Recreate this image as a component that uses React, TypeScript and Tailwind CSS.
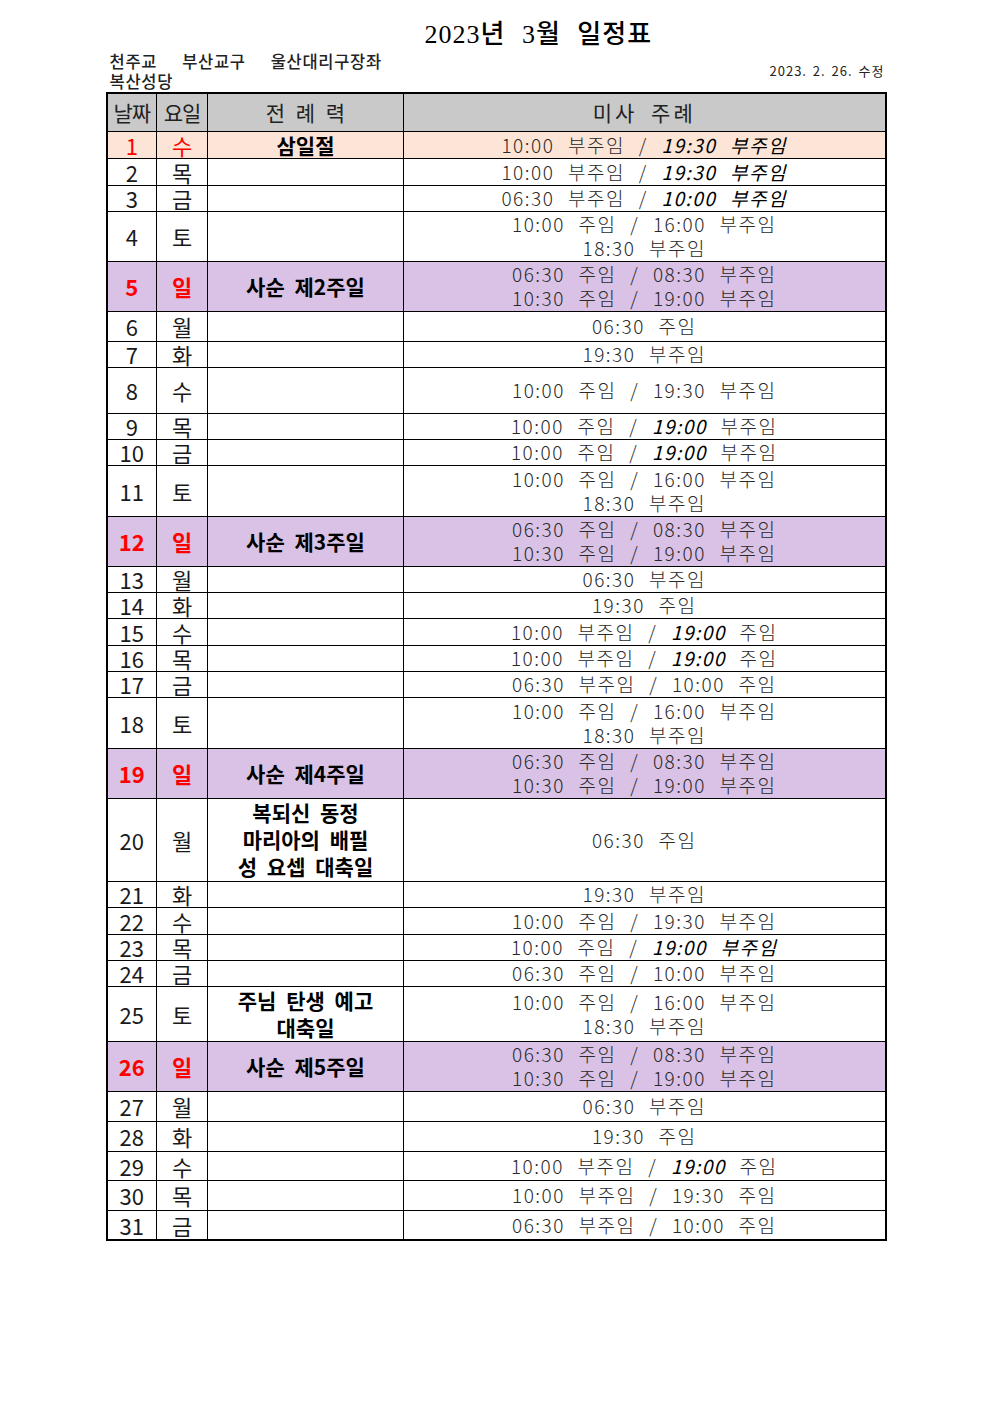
type Row = {
  day: number;
  dow: string;
  feast?: string[];
  mass: string[];
  h: string;
  tone?: "peach" | "sunday";
};

// mass lines: text between * * is set in italic
const rows: Row[] = [
  { day: 1, dow: "수", feast: ["삼일절"], mass: ["10:00 부주임 / *19:30 부주임*"], h: "h-[27px]", tone: "peach" },
  { day: 2, dow: "목", mass: ["10:00 부주임 / *19:30 부주임*"], h: "h-[27px]" },
  { day: 3, dow: "금", mass: ["06:30 부주임 / *10:00 부주임*"], h: "h-[26px]" },
  { day: 4, dow: "토", mass: ["10:00 주임 / 16:00 부주임", "18:30 부주임"], h: "h-[50px]" },
  { day: 5, dow: "일", feast: ["사순 제2주일"], mass: ["06:30 주임 / 08:30 부주임", "10:30 주임 / 19:00 부주임"], h: "h-[50px]", tone: "sunday" },
  { day: 6, dow: "월", mass: ["06:30 주임"], h: "h-[30px]" },
  { day: 7, dow: "화", mass: ["19:30 부주임"], h: "h-[26px]" },
  { day: 8, dow: "수", mass: ["10:00 주임 / 19:30 부주임"], h: "h-[46px]" },
  { day: 9, dow: "목", mass: ["10:00 주임 / *19:00* 부주임"], h: "h-[26px]" },
  { day: 10, dow: "금", mass: ["10:00 주임 / *19:00* 부주임"], h: "h-[26px]" },
  { day: 11, dow: "토", mass: ["10:00 주임 / 16:00 부주임", "18:30 부주임"], h: "h-[51px]" },
  { day: 12, dow: "일", feast: ["사순 제3주일"], mass: ["06:30 주임 / 08:30 부주임", "10:30 주임 / 19:00 부주임"], h: "h-[50px]", tone: "sunday" },
  { day: 13, dow: "월", mass: ["06:30 부주임"], h: "h-[26px]" },
  { day: 14, dow: "화", mass: ["19:30 주임"], h: "h-[26px]" },
  { day: 15, dow: "수", mass: ["10:00 부주임 / *19:00* 주임"], h: "h-[27px]" },
  { day: 16, dow: "목", mass: ["10:00 부주임 / *19:00* 주임"], h: "h-[26px]" },
  { day: 17, dow: "금", mass: ["06:30 부주임 / 10:00 주임"], h: "h-[26px]" },
  { day: 18, dow: "토", mass: ["10:00 주임 / 16:00 부주임", "18:30 부주임"], h: "h-[51px]" },
  { day: 19, dow: "일", feast: ["사순 제4주일"], mass: ["06:30 주임 / 08:30 부주임", "10:30 주임 / 19:00 부주임"], h: "h-[50px]", tone: "sunday" },
  { day: 20, dow: "월", feast: ["복되신 동정", "마리아의 배필", "성 요셉 대축일"], mass: ["06:30 주임"], h: "h-[83px]" },
  { day: 21, dow: "화", mass: ["19:30 부주임"], h: "h-[26px]" },
  { day: 22, dow: "수", mass: ["10:00 주임 / 19:30 부주임"], h: "h-[27px]" },
  { day: 23, dow: "목", mass: ["10:00 주임 / *19:00 부주임*"], h: "h-[26px]" },
  { day: 24, dow: "금", mass: ["06:30 주임 / 10:00 부주임"], h: "h-[26px]" },
  { day: 25, dow: "토", feast: ["주님 탄생 예고", "대축일"], mass: ["10:00 주임 / 16:00 부주임", "18:30 부주임"], h: "h-[55px]" },
  { day: 26, dow: "일", feast: ["사순 제5주일"], mass: ["06:30 주임 / 08:30 부주임", "10:30 주임 / 19:00 부주임"], h: "h-[50px]", tone: "sunday" },
  { day: 27, dow: "월", mass: ["06:30 부주임"], h: "h-[30px]" },
  { day: 28, dow: "화", mass: ["19:30 주임"], h: "h-[30px]" },
  { day: 29, dow: "수", mass: ["10:00 부주임 / *19:00* 주임"], h: "h-[29px]" },
  { day: 30, dow: "목", mass: ["10:00 부주임 / 19:30 주임"], h: "h-[30px]" },
  { day: 31, dow: "금", mass: ["06:30 부주임 / 10:00 주임"], h: "h-[30px]" },
];

function MassLine({ line }: { line: string }) {
  const parts = line.split("*");
  return (
    <div className="leading-[24px] whitespace-pre">
      {parts.map((p, i) =>
        i % 2 === 1 ? (
          <span key={i} className="italic font-normal text-black">
            {p}
          </span>
        ) : (
          <span key={i}>{p}</span>
        )
      )}
    </div>
  );
}

export default function App() {
  return (
    <div className="min-h-screen bg-white font-['Noto_Sans_CJK_KR',sans-serif] text-[#1a1a1a]">
      <div className="mx-auto w-[781px] pt-[19px]">
        {/* Title */}
        <div className="h-[32px] pl-[319px] font-['Liberation_Serif','Noto_Sans_CJK_KR',serif] text-[26px] leading-[32px] font-medium tracking-[1px] [word-spacing:9px] text-black">
          2023년 3월 일정표
        </div>

        {/* Parish / revision */}
        <div className="flex items-center justify-between">
          <div className="pl-[4px] text-[16.5px] font-medium text-[#222]">
            <div className="flex gap-[25px] leading-[20px] tracking-[0.7px]">
              <span>천주교</span>
              <span>부산교구</span>
              <span>울산대리구장좌</span>
            </div>
            <div className="leading-[20px] tracking-[0.7px]">복산성당</div>
          </div>
          <div className="pr-[2px] text-[13px] tracking-[1px] [word-spacing:2px] text-[#222]">2023. 2. 26. 수정</div>
        </div>

        {/* Schedule table */}
        <table className="mt-[1px] w-[781px] table-fixed border-collapse border-[2px] border-black">
          <colgroup>
            <col className="w-[50px]" />
            <col className="w-[51px]" />
            <col className="w-[196px]" />
            <col />
          </colgroup>
          <thead>
            <tr className="h-[38px] bg-[#c9c9c9] text-[21px] text-[#222]">
              <th className="border border-black p-0 font-normal tracking-[-1px]">날짜</th>
              <th className="border border-black p-0 font-normal tracking-[-1px]">요일</th>
              <th className="border border-black p-0 font-normal [word-spacing:6px]">전 례 력</th>
              <th className="border border-black p-0 font-normal tracking-[3px] [word-spacing:6px]">미사 주례</th>
            </tr>
          </thead>
          <tbody>
            {rows.map((r) => {
              const sunday = r.tone === "sunday";
              const red = sunday || r.tone === "peach";
              const bg = sunday ? "bg-[#d9c2e5]" : r.tone === "peach" ? "bg-[#fce4d6]" : "bg-white";
              const multi = (r.feast?.length ?? 0) > 1;
              return (
                <tr key={r.day} className={`${r.h} ${bg}`}>
                  <td
                    className={`border border-black p-0 text-center text-[22px] leading-[22px] ${
                      red ? "text-[#ff0000]" : ""
                    } ${sunday ? "font-bold" : ""}`}
                  >
                    {r.day}
                  </td>
                  <td
                    className={`border border-black p-0 text-center text-[22px] leading-[22px] ${
                      red ? "text-[#ff0000]" : ""
                    } ${sunday ? "font-bold" : ""}`}
                  >
                    {r.dow}
                  </td>
                  <td
                    className={`border border-black p-0 text-center text-[21px] font-bold [word-spacing:5px] text-black ${
                      multi ? "leading-[27px]" : "leading-[24px]"
                    }`}
                  >
                    {r.feast?.map((f) => (
                      <div key={f}>{f}</div>
                    ))}
                  </td>
                  <td className="border border-black p-0 text-center text-[19px] font-light tracking-[1.5px] [word-spacing:8px] text-[#2a2a2a]">
                    {r.mass.map((m) => (
                      <MassLine key={m} line={m} />
                    ))}
                  </td>
                </tr>
              );
            })}
          </tbody>
        </table>
      </div>
    </div>
  );
}
